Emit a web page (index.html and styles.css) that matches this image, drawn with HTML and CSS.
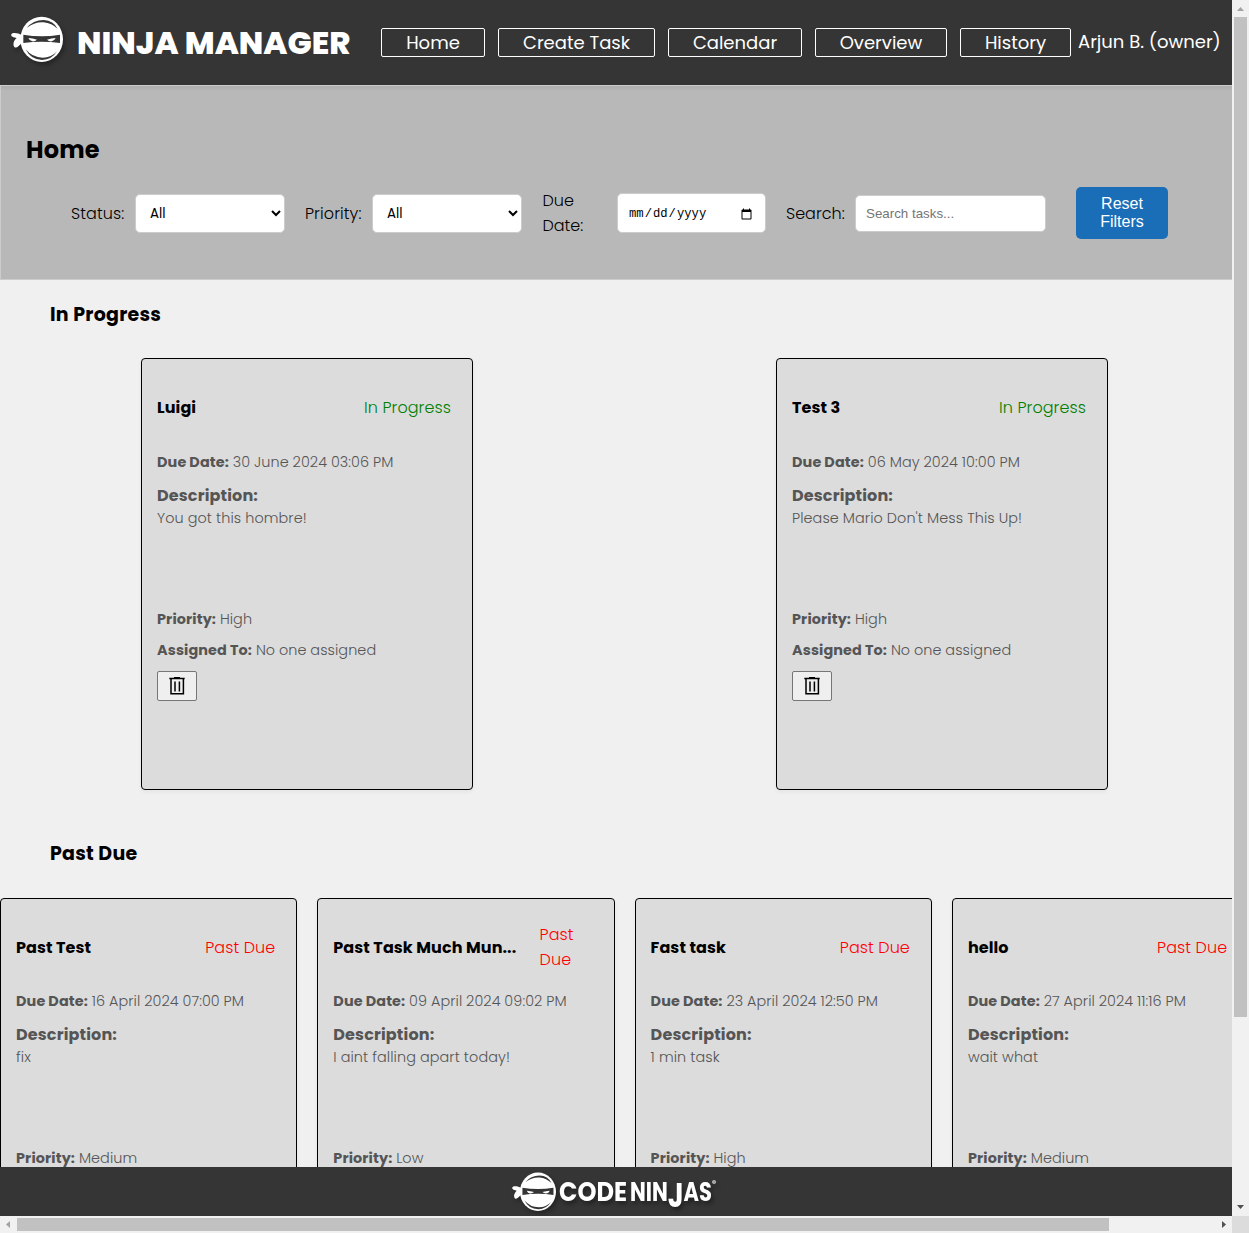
FILE: index.html
```html
<!DOCTYPE html>
<html lang="en">
<head>
<meta charset="utf-8">
<title>Ninja Manager</title>
<link rel="stylesheet" href="styles.css">
</head>
<body>
<svg width="0" height="0" class="defs" aria-hidden="true">
  <symbol id="ninja" viewBox="0 0 156 138">
    <path fill="#fff" d="M32 57C22 50 4 48 1 55c-2 7 7 9 16 11-8 6-13 20-7 27 6 6 15-4 22-13z"/>
    <ellipse cx="92" cy="70" rx="64" ry="68" fill="#fff"/>
    <path fill="#353535" d="M37 56q55 9 110 0v25q-55-8-110 0zM47 36Q66 12 98 12q30 1 42 27-17-18-43-20-28-1-50 17zM44 100q20 25 51 25 27 0 43-19-15 25-45 26-34-1-49-32z"/>
    <path fill="#fff" d="M52 66q13 1 26 5-6 6-14 5-8-1-12-10zM134 66q-13 1-26 5 6 6 14 5 8-1 12-10z"/>
  </symbol>
  <symbol id="trash" viewBox="0 0 16 20">
    <path fill="none" stroke="#000" stroke-width="1.5" d="M.3 2.500h15.400M5 1.700h6M2 3v14.700h12.400V3M6 5.500v10M10.400 5.500v10"/>
  </symbol>
</svg>
<div class="window">
  <div class="page">
    <header class="topbar">
      <svg class="brand-icon"><use href="#ninja"/></svg>
      <h1 class="brand">NINJA MANAGER</h1>
      <nav class="nav">
        <a class="nav-link w-home">Home</a>
        <a class="nav-link w-create">Create Task</a>
        <a class="nav-link w-calendar">Calendar</a>
        <a class="nav-link w-overview">Overview</a>
        <a class="nav-link w-history">History</a>
      </nav>
      <span class="user">Arjun B. (owner)</span>
    </header>
    <section class="filters">
      <h2 class="page-title">Home</h2>
      <div class="filter-row">
        <label class="label-status">Status:</label>
        <select class="field"><option>All</option></select>
        <label class="label-priority">Priority:</label>
        <select class="field"><option>All</option></select>
        <label class="label-date">Due Date:</label>
        <input class="field date" type="date">
        <label class="label-search">Search:</label>
        <input class="field search" type="text" placeholder="Search tasks...">
        <button class="reset">Reset Filters</button>
      </div>
    </section>
    <main class="board">
      <h3 class="group-title">In Progress</h3>
      <div class="cards progress">
        <article class="card">
          <div class="card-head"><h4>Luigi</h4><span class="status">In Progress</span></div>
          <p class="line due"><b>Due Date:</b> 30 June 2024 03:06 PM</p>
          <p class="desc-label">Description:</p>
          <p class="desc">You got this hombre!</p>
          <p class="line"><b>Priority:</b> High</p>
          <p class="line assigned"><b>Assigned To:</b> No one assigned</p>
          <button class="delete"><svg><use href="#trash"/></svg></button>
        </article>
        <article class="card">
          <div class="card-head"><h4>Test 3</h4><span class="status">In Progress</span></div>
          <p class="line due"><b>Due Date:</b> 06 May 2024 10:00 PM</p>
          <p class="desc-label">Description:</p>
          <p class="desc">Please Mario Don't Mess This Up!</p>
          <p class="line"><b>Priority:</b> High</p>
          <p class="line assigned"><b>Assigned To:</b> No one assigned</p>
          <button class="delete"><svg><use href="#trash"/></svg></button>
        </article>
      </div>
      <h3 class="group-title">Past Due</h3>
      <div class="cards past">
        <article class="card">
          <div class="card-head"><h4>Past Test</h4><span class="status">Past Due</span></div>
          <p class="line due"><b>Due Date:</b> 16 April 2024 07:00 PM</p>
          <p class="desc-label">Description:</p>
          <p class="desc">fix</p>
          <p class="line"><b>Priority:</b> Medium</p>
        </article>
        <article class="card">
          <div class="card-head"><h4>Past Task Much Mun...</h4><span class="status narrow">Past Due</span></div>
          <p class="line due"><b>Due Date:</b> 09 April 2024 09:02 PM</p>
          <p class="desc-label">Description:</p>
          <p class="desc">I aint falling apart today!</p>
          <p class="line"><b>Priority:</b> Low</p>
        </article>
        <article class="card">
          <div class="card-head"><h4>Fast task</h4><span class="status">Past Due</span></div>
          <p class="line due"><b>Due Date:</b> 23 April 2024 12:50 PM</p>
          <p class="desc-label">Description:</p>
          <p class="desc">1 min task</p>
          <p class="line"><b>Priority:</b> High</p>
        </article>
        <article class="card">
          <div class="card-head"><h4>hello</h4><span class="status">Past Due</span></div>
          <p class="line due"><b>Due Date:</b> 27 April 2024 11:16 PM</p>
          <p class="desc-label">Description:</p>
          <p class="desc">wait what</p>
          <p class="line"><b>Priority:</b> Medium</p>
        </article>
      </div>
    </main>
    <footer class="footer">
      <svg class="footer-icon"><use href="#ninja"/></svg>
      <svg class="footer-word" viewBox="0 0 160 40">
        <text x="0" y="26" textLength="68" lengthAdjust="spacingAndGlyphs">CODE</text>
        <text x="71" y="26" textLength="82" lengthAdjust="spacingAndGlyphs">NIN<tspan class="tall" dy="6">J</tspan><tspan dy="-6">AS</tspan></text>
        <text class="mark" x="153" y="11">®</text>
      </svg>
    </footer>
  </div>
  <div class="scroll-y">
    <svg viewBox="0 0 17 17"><path fill="#a3a3a3" d="M5 11l3.500-4 3.500 4z"/></svg>
    <div class="thumb-y"></div>
    <svg viewBox="0 0 17 17"><path fill="#505050" d="M5 6l3.500 4 3.500-4z"/></svg>
  </div>
  <div class="scroll-x">
    <svg viewBox="0 0 17 17"><path fill="#a3a3a3" d="M10 5l-4 3.500 4 3.500z"/></svg>
    <div class="thumb-x"></div>
    <svg viewBox="0 0 17 17"><path fill="#505050" d="M7 5l4 3.500-4 3.500z"/></svg>
  </div>
  <div class="corner"></div>
</div>
</body>
</html>
```
FILE: styles.css
```css
* { box-sizing: border-box; }
body { margin: 0; overflow: hidden; background: #f0f0f0; font: 300 16px/25px Poppins, Inter, "Liberation Sans", sans-serif; color: #000; }
h1, h2, h3, h4, p { margin: 0; white-space: nowrap; }
.defs { position: absolute; }
.window { display: grid; grid-template: 1216px 17px / 1232px 17px; }
.page { display: flex; flex-direction: column; height: 1216px; overflow: hidden; }

.topbar { display: flex; align-items: center; flex: none; height: 85px; background: #353535; color: #fff; }
.brand-icon { width: 52px; height: 46px; margin: 0 0 7px 11px; filter: drop-shadow(2px 3px 2px rgba(0,0,0,.3)); }
.brand { width: 303px; padding-left: 14px; font-size: 32px; font-weight: 800; line-height: 40px; }
.nav { display: flex; gap: 13px; margin-left: 15px; }
.nav-link { height: 29px; border: 1px solid #fff; border-radius: 2px; font-size: 18px; font-weight: 400; line-height: 28px; text-align: center; }
.w-home { width: 104px; }
.w-create { width: 157px; }
.w-calendar { width: 134px; }
.w-overview { width: 132px; }
.w-history { width: 111px; }
.user { margin: 0 0 2px 7px; font-size: 18px; font-weight: 400; white-space: nowrap; }

.filters { flex: none; height: 195px; padding: 47px 0 0 25px; background: #b8b8b8 linear-gradient(#aeaeae, #b8b8b8) 0 0 / 100% 5px no-repeat; border: 1px solid #ccc; border-right: 0; }
.page-title { font-size: 24px; font-weight: 700; line-height: 34px; letter-spacing: .2px; }
.filter-row { display: flex; align-items: center; height: 52px; margin: 20px 0 0 45px; }
.field { width: 150px; height: 39px; border: 1px solid #ccc; border-radius: 5px; background: #fff; padding: 8px 10px 11px; color: #000; font: 400 13.333px Poppins, Inter, "Liberation Sans", sans-serif; }
.label-status { width: 64px; letter-spacing: .1px; }
.label-priority { width: 67px; margin-left: 20px; letter-spacing: .1px; }
.label-date { width: 55px; margin: 0 19.500px 0 20.500px; }
.label-search { width: 69px; margin-left: 20px; }
.date { width: 149px; height: 40px; padding: 11px 10px 9px; font: 12.2px "Liberation Mono", monospace; }
.date::-webkit-calendar-picker-indicator { width: 13px; height: 13px; }
.search { width: 191px; height: 37px; padding: 10px; font: 13.333px "Liberation Sans", sans-serif; }
.search::placeholder { color: #757575; }
.reset { width: 92px; height: 52px; margin-left: 30px; padding: 0 15px; border: 0; border-radius: 5px; background: #1a6eb8; color: #fff; font: 16px/18px "Liberation Sans", sans-serif; }

.board { flex: 1; min-height: 0; overflow: hidden; }
.group-title { padding: 20px 0 0 50px; font-size: 19px; font-weight: 700; line-height: 30px; letter-spacing: .25px; }
.cards { display: flex; }
.progress { gap: 303px; padding: 28px 0 28px 141px; }
.progress + .group-title { padding-top: 21px; }
.past { gap: 20px; padding-top: 29px; }
.card { flex: none; width: 332px; height: 432px; padding: 15px; background: #dcdcdc; border: 1px solid #000; border-radius: 4px; box-shadow: 0 2px 4px rgba(0,0,0,.05); }
.past .card { width: 297.3px; }
.card-head { display: flex; align-items: center; justify-content: space-between; height: 66px; padding-right: 6px; }
.past .card-head { margin-bottom: -1px; }
.card-head h4 { font-size: 16px; font-weight: 700; letter-spacing: .08px; }
.status { color: #008000; letter-spacing: .08px; }
.past .status { color: #f00; }
.past .narrow { width: 53px; }
.line { color: #555; font-size: 14.4px; line-height: 24px; letter-spacing: .08px; word-spacing: -.2px; }
.line b { font-weight: 700; letter-spacing: .12px; }
.due { margin: 10px 0; }
.desc-label { color: #555; font-size: 16px; font-weight: 700; line-height: 24px; letter-spacing: .15px; }
.desc { height: 99px; color: #555; font-size: 14.4px; line-height: 20px; letter-spacing: .08px; }
.assigned { margin-top: 7px; }
.delete { display: grid; place-items: center; width: 40px; height: 30px; margin-top: 9px; padding: 0; border: 1px solid #767676; border-radius: 2px; background: #efefef; }
.delete svg { width: 16px; height: 20px; }

.footer { display: flex; flex: none; height: 49px; padding: 5px 0 0 512px; background: #353535; }
.footer-icon { width: 44px; height: 39px; filter: drop-shadow(2px 3px 2px rgba(0,0,0,.3)); }
.footer-word { width: 160px; height: 40px; margin: 3px 0 0 3px; overflow: visible; fill: #fff; font: 700 26px Poppins, Lato, sans-serif; filter: drop-shadow(2px 3px 2px rgba(0,0,0,.4)); }
.tall { font-size: 34px; }
.mark { font-size: 8px; }

.scroll-y, .scroll-x { display: flex; background: #f1f1f1; }
.scroll-y { flex-direction: column; justify-content: space-between; }
.scroll-y svg, .scroll-x svg { flex: none; width: 17px; height: 17px; }
.thumb-y { width: 13px; height: 1000px; margin: 0 2px auto; background: #c1c1c1; }
.thumb-x { width: 1092px; height: 13px; margin: 2px auto 2px 0; background: #c1c1c1; }
.corner { background: #dcdcdc; }
```
